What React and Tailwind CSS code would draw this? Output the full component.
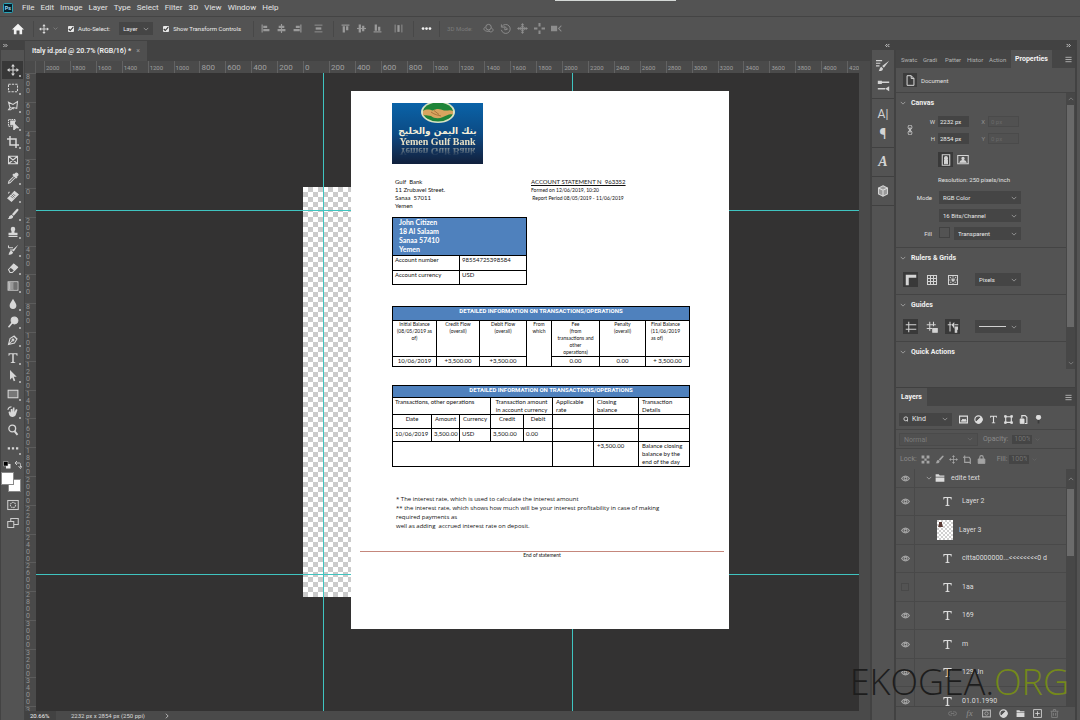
import React from "react";

const Svg = ({ s = 12, children, fill = "none", className = "" }) => (
  <svg width={s} height={s} viewBox="0 0 16 16" fill={fill} stroke={fill === "none" ? "currentColor" : "none"} strokeWidth="1.4" className={"shrink-0 " + className} aria-hidden="true">
    {children}
  </svg>
);

const MovePaths = () => (
  <>
    <path d="M8 2v12M2 8h12" />
    <path fill="currentColor" stroke="none" d="M8 0l2.6 3.4H5.4zM8 16l2.6-3.4H5.4zM0 8l3.4-2.6v5.2zM16 8l-3.400-2.600v5.200z" />
  </>
);
const Move = ({ s = 12 }) => <Svg s={s}><MovePaths /></Svg>;
const Brush = ({ s = 12 }) => (
  <Svg s={s} fill="currentColor">
    <path d="M14.800 1.200c.9.700.6 1.500 0 2.300L9 10.200 6.600 8.200l6-6.400c.7-.8 1.500-1.200 2.200-.6zM6 9l2.200 1.900c.2 2.600-2.300 4.300-7.200 3.600 1.900-1.100 1.500-2 2-3.500C3.500 9.600 4.700 8.800 6 9z" />
  </Svg>
);
const TypeT = ({ s = 12 }) => (
  <Svg s={s} fill="currentColor">
    <path d="M2 1.500h12V5h-1c-.3-1.500-.8-2-2-2H9v9.500c0 .8.500 1 2 1v1H5v-1c1.500 0 2-.2 2-1V3H5c-1.200 0-1.700.5-2 2H2z" />
  </Svg>
);
const Chev = ({ s = 6, className = "" }) => (
  <Svg s={s} className={className}><path strokeWidth="2" d="M2 5l6 6 6-6" /></Svg>
);
const Eye = () => (
  <Svg s={9}>
    <path strokeWidth="2" d="M1 8c3.500-5.500 10.500-5.500 14 0-3.500 5.500-10.500 5.500-14 0z" />
    <circle cx="8" cy="8" r="2.500" strokeWidth="2" />
  </Svg>
);
const Folder = ({ s = 10 }) => (
  <Svg s={s} fill="currentColor"><path d="M1 2h5l1.500 2H15v2H1zM1 7h14v7H1z" /></Svg>
);
const Menu = () => <Svg s={7}><path strokeWidth="2" d="M1 3h14M1 8h14M1 13h14" /></Svg>;
const Half = ({ s = 9 }) => (
  <Svg s={s}><circle cx="8" cy="8" r="6.500" strokeWidth="2" /><path fill="currentColor" d="M12.600 3.400A6.500 6.500 0 013.400 12.600z" /></Svg>
);

const TOOLS = [
  ["Move", <MovePaths />],
  ["Marquee", <rect x="2" y="3" width="12" height="10" strokeDasharray="3 1.500" />],
  ["Lasso", <path d="M2 3l6 3 6-4-1 9-5-1-3 3H2l2-3zM4 10l5 2" />],
  ["Object selection", <><path strokeDasharray="2 1" d="M7 11H2V2h9v4" /><path fill="currentColor" d="M5 4h5v5H5zM9 7l6 6h-3l-3 3z" /></>],
  ["Crop", <path strokeWidth="2" d="M4 0v12h12M0 4h12v12" />],
  ["Frame", <path d="M2 3h12v10H2zM2 3l12 10M14 3L2 13" />],
  ["Eyedropper", <><path d="M9 6l-6.500 6.500L2 15l2-.5L10.500 8" /><path fill="currentColor" d="M8 4l4 4 1-1-1-1 2-1c2-2-1-5-3-3L10 4 9 3z" /></>],
  ["Healing brush", <><path fill="currentColor" d="M1 11l9-9 5 4-9 9z" /><path strokeWidth="1" d="M2 5V3h2" /><path stroke="#535353" strokeWidth="1" d="M6 6l4 4M5 8l3 3M8 5l3 3" /></>],
  ["Brush", <path fill="currentColor" stroke="none" d="M14.800 1.200c.9.700.6 1.500 0 2.300L9 10.200 6.600 8.200l6-6.400c.7-.8 1.500-1.200 2.200-.6zM6 9l2.200 1.900c.2 2.600-2.300 4.300-7.200 3.600 1.900-1.100 1.500-2 2-3.500z" />],
  ["Clone stamp", <path fill="currentColor" stroke="none" d="M5 4a3 3 0 116 0c0 2-1.500 2.500-1 5h4v3H2V9h4c.5-2.500-1-3-1-5zM2 13h12v1.500H2z" />],
  ["History brush", <><path d="M2 5h6M4 8h4M2 2v3" /><path fill="currentColor" stroke="none" d="M15 1L9 10 7 8zM6 9l2 2c0 2-3 4-6 3 1-1 1-5 4-5z" /></>],
  ["Eraser", <><path d="M2 10l7-7 5 4-7 7H4z" /><path fill="currentColor" d="M5 7l4-4 5 4-4 4z" /></>],
  ["Gradient", <><rect x="1.500" y="2.500" width="13" height="11" /><path fill="#bbb" stroke="none" d="M2 3h3v10H2z" /><path fill="#999" stroke="none" d="M5 3h4v10H5z" /><path fill="#707070" stroke="none" d="M9 3h5v10H9z" /></>],
  ["Blur", <path fill="currentColor" stroke="none" d="M8 1c2 4 4.500 6 4.500 9a4.500 4.500 0 01-9 0C3.500 7 6 5 8 1z" />],
  ["Dodge", <><circle cx="10" cy="6" r="4.500" fill="currentColor" /><path strokeWidth="2" d="M7 9l-5 6" /></>],
  ["Pen", <><path d="M2 14L4 6l5-3 4 4-3 5zM2 14l5-5M9 2l5 5" /><circle cx="8" cy="8" r="1.200" /></>],
  ["Type", <path fill="currentColor" stroke="none" d="M2 1.500h12V5h-1c-.3-1.500-.8-2-2-2H9v9.500c0 .8.500 1 2 1v1H5v-1c1.500 0 2-.2 2-1V3H5c-1.200 0-1.700.5-2 2H2z" />],
  ["Path selection", <path fill="currentColor" stroke="none" d="M4 0l9 9H9l2 5-2 1-2-5-3 3z" />],
  ["Rectangle", <rect x="1.500" y="3" width="13" height="10" fill="#777" />],
  ["Rotate view", <><path fill="currentColor" stroke="none" d="M2 8l2-1 1 2V4h2v4l1-6h2v6l2-4 2 1-2 6c-1 4-7 5-9 1z" /><path d="M1 5c1-3 3-4 5-4" /></>],
  ["Zoom", <><circle cx="7" cy="6" r="4.500" strokeWidth="1.800" /><path strokeWidth="2.500" d="M10 9.500l4 5" /></>],
  ["More tools", <path fill="currentColor" stroke="none" d="M1 7h3v3H1zM6.500 7h3v3h-3zM12 7h3v3h-3z" />],
];

const H_LABELS = Array.from({ length: 32 }, (_, i) => Math.abs(-2000 + i * 200));
const V_LABELS = Array.from({ length: 23 }, (_, i) => Math.abs(-800 + i * 200));

function Select({ label, value, className = "", dim = false }) {
  return (
    <span className={"relative flex h-[13px] items-center bg-[#454545] " + className}>
      <select aria-label={label} className={"h-full w-full appearance-none truncate bg-transparent px-1 leading-3 outline-none " + (dim ? "text-[#7b7b7b]" : "text-[#e8e8e8]")}>
        <option>{value}</option>
      </select>
      <Chev s={6} className={"pointer-events-none absolute right-1 " + (dim ? "text-[#707070]" : "text-[#a8a8a8]")} />
    </span>
  );
}

function Check({ label }) {
  return (
    <label className="flex items-center gap-1">
      <input type="checkbox" defaultChecked className="peer sr-only" />
      <span className="flex size-[6px] items-center justify-center rounded-[1px] bg-[#e8e8e8] text-[#333]">
        <Svg s={6}><path strokeWidth="3" d="M2 8l4 4 8-9" /></Svg>
      </span>
      {label}
    </label>
  );
}

function MenuBar() {
  return (
    <nav className="flex h-[17px] shrink-0 items-center border-b border-[#444] pl-[3px] text-[8px] text-[#e4e4e4]">
      <svg width="10" height="10" viewBox="0 0 20 20" aria-hidden="true" className="mr-[6px]">
        <rect x="1" y="1" width="18" height="18" rx="2" fill="#04202e" stroke="#2aa5b8" strokeWidth="2" />
        <text x="10" y="14" textAnchor="middle" fontSize="11" fontWeight="700" fill="#9fdcf5" fontFamily="Roboto, sans-serif">Ps</text>
      </svg>
      {["File", "Edit", "Image", "Layer", "Type", "Select", "Filter", "3D", "View", "Window", "Help"].map((m) => (
        <button key={m} type="button" className="px-[3px] leading-4">{m}</button>
      ))}
    </nav>
  );
}

const Rule = () => <span className="h-4 w-px bg-[#484848]" />;

function OptionsBar() {
  const al = {
    l: <><path strokeWidth="2" d="M2 1v14" /><path fill="currentColor" stroke="none" d="M4 3h7v4H4zM4 9h11v4H4z" /></>,
    c: <><path strokeWidth="2" d="M8 0v16" /><path fill="currentColor" stroke="none" d="M3 3h10v4H3zM1 9h14v4H1z" /></>,
    r: <><path strokeWidth="2" d="M14 1v14" /><path fill="currentColor" stroke="none" d="M5 3h7v4H5zM1 9h11v4H1z" /></>,
    d: <><path strokeWidth="1.500" d="M1 2h14M1 14h14" /><path fill="currentColor" stroke="none" d="M3 6h10v4H3z" /></>,
    t: <><path strokeWidth="2" d="M1 2h14" /><path fill="currentColor" stroke="none" d="M3 4h4v11H3zM9 4h4v7H9z" /></>,
    m: <><path strokeWidth="2" d="M0 8h16" /><path fill="currentColor" stroke="none" d="M3 1h4v14H3zM9 3h4v10H9z" /></>,
    b: <><path strokeWidth="2" d="M1 14h14" /><path fill="currentColor" stroke="none" d="M3 1h4v11H3zM9 5h4v7H9z" /></>,
    v: <><path strokeWidth="1.500" d="M2 1v14M14 1v14" /><path fill="currentColor" stroke="none" d="M6 2h4v12H6z" /></>,
  };
  const Btn = ({ name, k }) => <button type="button" aria-label={name}><Svg s={9}>{al[k]}</Svg></button>;
  return (
    <div className="flex h-[23px] shrink-0 items-center pl-3 text-[6px] text-[#ececec]">
      <button type="button" aria-label="Home" className="mr-[9px] text-[#f2f2f2]">
        <Svg s={12} fill="currentColor"><path d="M8 1l8 7.500h-2.500V15H10v-5H6v5H2.500V8.500H0z" /></Svg>
      </button>
      <Rule />
      <button type="button" aria-label="Move tool preset" className="ml-[5px] flex items-center gap-1 text-[#dcdcdc]"><Move s={10} /><Chev s={5} className="text-[#999]" /></button>
      <div className="ml-[10px] flex items-center"><Check label="Auto-Select:" /></div>
      <Select label="Auto-select target" value="Layer" className="ml-[9px] w-[34px]" />
      <div className="ml-[10px]"><Check label="Show Transform Controls" /></div>
      <div className="ml-[12px] flex items-center gap-[7px] text-[#9a9a9a]">
        <Rule /><Btn name="Align left" k="l" /><Btn name="Align centre" k="c" /><Btn name="Align right" k="r" />
      </div>
      <div className="ml-[12px] flex text-[#9a9a9a]"><Btn name="Distribute" k="d" /></div>
      <div className="ml-[10px] flex items-center gap-[7px] text-[#9a9a9a]">
        <Rule /><Btn name="Align top" k="t" /><Btn name="Align middle" k="m" /><Btn name="Align bottom" k="b" />
      </div>
      <div className="ml-[12px] flex text-[#9a9a9a]"><Btn name="Distribute vertically" k="v" /></div>
      <div className="ml-[10px] flex items-center gap-[7px]">
        <Rule />
        <button type="button" aria-label="More" className="text-[#f0f0f0]"><Svg s={11} fill="currentColor"><circle cx="3" cy="8" r="2" /><circle cx="8" cy="8" r="2" /><circle cx="13" cy="8" r="2" /></Svg></button>
        <Rule />
      </div>
      <span className="ml-[7px] text-[#7c7c7c]">3D Mode:</span>
      <div className="ml-[10px] flex items-center gap-[6px] text-[#8d8d8d]">
        <Svg s={11}><circle cx="8" cy="6" r="4" /><path d="M3 6c-5 4 2 7 7 6M12 7c5 3 2 6-1 6l-3-2" /></Svg>
        <Svg s={11}><path d="M2 2v4h4M3 5a6.500 6.500 0 11-1 5" /><path d="M7 5l4 4-4 1z" /></Svg>
        <Svg s={11}><MovePaths /><circle cx="8" cy="8" r="3" /></Svg>
        <Svg s={11}><path strokeWidth="3" d="M8 0v5M8 11v5M0 8h5M11 8h5" /></Svg>
        <Svg s={11} fill="currentColor"><path d="M0 4h9v8H0zM10 8l5-5v2l-3 3 3 3v2z" /></Svg>
      </div>
    </div>
  );
}

function Toolbar() {
  return (
    <aside className="flex w-[25px] shrink-0 flex-col border-x border-[#434343] bg-[#535353]">
      <div className="flex h-[10px] shrink-0 items-center bg-[#424242] pl-[2px] text-[#d0d0d0]"><Svg s={5}><path strokeWidth="3" d="M1 3l5 5-5 5M8 3l5 5-5 5" /></Svg></div>
      <div className="h-[11px] shrink-0" />
      {TOOLS.map(([name, icon], i) => (
        <button key={name} type="button" aria-label={name} className={"relative mx-[1px] flex h-[18px] shrink-0 items-center justify-center text-[#d8d8d8] " + (i === 0 ? "bg-[#383838]" : "")}>
          <Svg s={12}>{icon}</Svg>
          {i !== 5 && i !== 20 && <span className="absolute bottom-[2px] right-[2px] size-[2px] bg-[#a8a8a8]" />}
        </button>
      ))}
      <div className="mt-[4px] flex justify-between px-[2px] text-[#c8c8c8]">
        <Svg s={8}><path fill="#eee" stroke="none" d="M6 6h9v9H6z" /><path fill="#000" stroke="#ddd" strokeWidth="1" d="M1 1h9v9H1z" /></Svg>
        <Svg s={8}><path strokeWidth="2" d="M3 4h8c2 0 2 1 2 8M6 0L2 4l4 4M9 10l4 5 3-5" /></Svg>
      </div>
      <div className="relative mt-[3px] size-[20px] shrink-0">
        <span className="absolute bottom-0 right-0 size-[13px] border border-[#888] bg-white" />
        <span className="absolute left-0 top-0 size-[13px] border border-[#888] bg-white" />
      </div>
      <button type="button" aria-label="Quick mask" className="mt-[4px] flex h-[18px] items-center justify-center text-[#ccc]"><Svg s={12}><rect x="1" y="2" width="14" height="12" /><circle cx="8" cy="8" r="3.500" strokeDasharray="2 1" /></Svg></button>
      <button type="button" aria-label="Screen mode" className="flex h-[18px] items-center justify-center text-[#ccc]"><Svg s={12}><path d="M1 6h8v8H1zM5 6V2h10v8H9" /></Svg></button>
    </aside>
  );
}

function Logo() {
  return (
    <div className="flex h-[61px] w-[91px] flex-col items-center overflow-hidden bg-linear-to-b from-[#0a63a8] via-[#0b4b85] to-[#10203c]">
      <svg width="36" height="21" viewBox="0 0 72 42" aria-hidden="true" className="shrink-0">
        <ellipse cx="36" cy="18" rx="34" ry="22" fill="#d9e3c4" />
        <ellipse cx="36" cy="18" rx="30" ry="19" fill="#1f8438" />
        <path d="M6 16c8-5 14-2 20-1 6-4 14-4 22 0 6 1 12-2 18 1v7c-8-2-12 2-20 5-8 4-18 3-24-2-6 0-10-2-16-1z" fill="#d8a45f" />
        <path d="M22 18c8 6 14 6 20 8M28 15l10 8" stroke="#97642f" strokeWidth="1.500" fill="none" />
      </svg>
      <div dir="rtl" lang="ar" className="mt-[1px] whitespace-nowrap font-['DejaVu_Sans',sans-serif] text-[9px] font-bold leading-[12px] text-[#f4efd9]">بنك اليمن والخليج</div>
      <div className="whitespace-nowrap font-['Liberation_Serif',serif] text-[10px] font-bold leading-[9px] text-[#e6dfc4] [-webkit-box-reflect:below_1px_linear-gradient(transparent,rgba(255,255,255,0.6))]">Yemen Gulf Bank</div>
    </div>
  );
}

const cell = "border border-black p-0 align-top font-normal ";

function Statement() {
  return (
    <article className="absolute left-[315px] top-[18px] min-h-[538px] w-[378px] bg-white pt-3 font-[Lato,sans-serif] text-[6px] leading-[8px] text-[#111]">
      <div className="pl-[41px]">
        <Logo />
        <div className="mt-[14px] flex">
          <address className="w-[139px] whitespace-pre pl-[3px] not-italic">{"Gulf  Bank\n11 Zrubavel Street.\nSanaa  57011\nYemen"}</address>
          <div className="whitespace-pre text-[5px]">
            <h1 className="text-[6px] underline">{"ACCOUNT STATEMENT N  963352"}</h1>
            <p>Formed on 12/06/2019, 10:20</p>
            <p>{" Report Period 08/05/2019 - 11/06/2019"}</p>
          </div>
        </div>

        <table className="mt-[7px] w-[135px] table-fixed border-collapse">
          <tbody>
            <tr><th colSpan="2" className={"h-[38px] border border-black bg-[#4f81bd] p-0 pl-[6px] text-left align-top text-[7px] font-bold leading-[9px] text-white"}>John Citizen<br />18 Al Salaam<br />Sanaa 57410<br />Yemen</th></tr>
            <tr><td className={cell + "h-[15px] pl-[2px]"}>Account number</td><td className={cell + "pl-[2px]"}>98554725398584</td></tr>
            <tr><td className={cell + "h-[14px] pl-[2px]"}>Account currency</td><td className={cell + "pl-[2px]"}>USD</td></tr>
          </tbody>
        </table>

        <table className="mt-[21px] w-[298px] table-fixed border-collapse text-center">
          <colgroup><col className="w-[44px]" /><col className="w-[43px]" /><col className="w-[47px]" /><col className="w-[25px]" /><col className="w-[48px]" /><col className="w-[46px]" /><col /></colgroup>
          <tbody>
            <tr><th colSpan="7" className="h-[14px] border border-black bg-[#4f81bd] p-0 align-top font-[Roboto,sans-serif] text-[6px] font-bold text-white">DETAILED INFORMATION ON TRANSACTIONS/OPERATIONS</th></tr>
            <tr className="text-[5px] leading-[7px]">
              <th className={cell + "h-[36px]"}>Initial Balance<br />(08/05/2019 as<br />of)</th>
              <th className={cell}>Credit Flow<br />(overall)</th>
              <th className={cell}>Debit Flow<br />(overall)</th>
              <th rowSpan="2" className={cell}>From<br />which</th>
              <th className={cell}>Fee<br />(from<br />transactions and<br />other<br />operations)</th>
              <th className={cell}>Penalty<br />(overall)</th>
              <th className={cell + "pl-[5px] text-left"}>Final Balance<br />(11/06/2019<br />as of)</th>
            </tr>
            <tr>
              {["10/06/2019", "+3,500.00", "+3,500.00", "0.00", "0.00", "+ 3,500.00"].map((t, i) => <td key={i} className={cell + "h-[10px]"}>{t}</td>)}
            </tr>
          </tbody>
        </table>

        <table className="mt-[18px] w-[298px] table-fixed border-collapse">
          <colgroup><col className="w-[39px]" /><col className="w-[28px]" /><col className="w-[31px]" /><col className="w-[33px]" /><col className="w-[29px]" /><col className="w-[41px]" /><col className="w-[45px]" /><col /></colgroup>
          <tbody>
            <tr><th colSpan="8" className="h-[12px] border border-black bg-[#4f81bd] p-0 pl-5 align-top font-[Roboto,sans-serif] text-[6px] font-bold text-white">DETAILED INFORMATION ON TRANSACTIONS/OPERATIONS</th></tr>
            <tr className="text-left">
              <th colSpan="3" className={cell + "h-[17px] pl-[2px]"}>Transactions, other operations</th>
              <th colSpan="2" className={cell + "whitespace-nowrap text-center"}>Transaction amount<br />in account currency</th>
              <th className={cell + "pl-[3px]"}>Applicable<br />rate</th>
              <th className={cell + "pl-[3px]"}>Closing<br />balance</th>
              <th className={cell + "pl-[3px]"}>Transaction<br />Details</th>
            </tr>
            <tr className="text-center">
              {["Date", "Amount", "Currency", "Credit", "Debit", "", "", ""].map((t, i) => <td key={i} className={cell + "h-[14px]"}>{t}</td>)}
            </tr>
            <tr>
              {["10/06/2019", "3,500.00", "USD", "3,500.00", "0.00", "", "", ""].map((t, i) => <td key={i} className={cell + "h-[13px] pl-[2px] pt-[1px]"}>{t}</td>)}
            </tr>
            <tr>
              <td colSpan="5" className={cell + "h-[24px]"} /><td className={cell} />
              <td className={cell + "pl-[3px]"}>+3,500.00</td>
              <td className={cell + "pl-[3px]"}>Balance closing<br />balance by the<br />end of the day</td>
            </tr>
          </tbody>
        </table>

        <div className="mt-[28px] whitespace-pre pl-1 font-['Open_Sans',sans-serif] leading-[9px]">
          {"* The interest rate, which is used to calculate the interest amount\n** the interest rate, which shows how much will be your interest profitability in case of making\nrequired payments as\nwell as adding  accrued interest rate on deposit."}
        </div>
      </div>
      <p className="ml-[9px] mr-[5px] mt-[20px] border-t border-[#c5877c] text-center text-[5px] leading-[7px]">End of statement</p>
    </article>
  );
}

function Workspace() {
  return (
    <main className="flex min-w-0 flex-1 flex-col bg-[#424242]">
      <div className="flex h-[21px] shrink-0 items-end">
        <div role="tab" aria-selected="true" className="flex h-[20px] items-center gap-[5px] bg-[#4f4f4f] pl-[7px] pr-[7px] text-[7px] font-semibold text-[#f0f0f0]">
          Italy id.psd @ 20.7% (RGB/16) *
          <button type="button" aria-label="Close" className="font-normal text-[#999]">×</button>
        </div>
      </div>
      <div className="flex h-[12px] shrink-0 bg-[#4a4a4a] text-[#a0a0a0]">
        <span className="w-[11px] shrink-0 border-r border-[#5b5b5b]" />
        <div className="min-w-0 flex-1 overflow-hidden pl-[8px]">
          <div className="-mr-[14px] flex h-full">
            {H_LABELS.map((n, i) => (
              <span key={i} className={"min-w-0 flex-1 border-l border-[#626262] pl-[1px] leading-[14px] " + (n < 1000 ? "text-[8px]" : "text-[6px]")}>{n}</span>
            ))}
          </div>
        </div>
        <span className="w-[11px] shrink-0" />
      </div>
      <div className="flex min-h-0 flex-1">
        <div className="w-[11px] shrink-0 overflow-hidden bg-[#4a4a4a]">
          <div className="flex h-[calc(100%+24px)] flex-col text-[#949494]">
            {V_LABELS.map((n, i) => (
              <span key={i} className="flex min-h-0 flex-1 flex-col items-start border-t border-[#5c5c5c] pl-[1px] text-[7px] leading-[7px]">
                {String(n).split("").map((d, j) => <span key={j}>{d}</span>)}
              </span>
            ))}
          </div>
        </div>
        <div className="relative min-w-0 flex-1 overflow-hidden bg-[#333232]">
          <div className="absolute left-[267px] top-[114px] h-[410px] w-[400px] bg-white bg-[conic-gradient(#cbcbcb_25%,white_0_50%,#cbcbcb_0_75%,white_0)] bg-size-[10px_10px]" />
          <span className="absolute left-0 right-0 top-[137px] h-px bg-[#3fc4c0]" />
          <span className="absolute left-0 right-0 top-[501px] h-px bg-[#3fc4c0]" />
          <span className="absolute bottom-0 left-[287px] top-0 w-px bg-[#3fc4c0]" />
          <span className="absolute bottom-0 left-[536px] top-0 w-px bg-[#3fc4c0]" />
          <Statement />
        </div>
        <div className="w-[11px] shrink-0 bg-[#4a4a4a]" />
      </div>
      <footer className="flex h-[9px] shrink-0 items-center overflow-hidden whitespace-pre bg-[#4a4a4a] text-[6px] leading-[9px] text-[#d8d8d8]">
        <span className="w-[31px] bg-[#424242] pl-[5px] text-[#f0f0f0]">20.66%</span>
        <span className="w-[108px] pl-[15px]">2232 px x 2854 px (250 ppi)</span>
        <Svg s={6} className="-rotate-90"><path strokeWidth="2" d="M2 5l6 6 6-6" /></Svg>
      </footer>
    </main>
  );
}

function IconStrip() {
  const grp = "flex flex-col items-center border-b border-[#404040] text-[#d4d4d4] ";
  return (
    <aside className="flex w-[26px] shrink-0 flex-col border-x-2 border-[#424242] bg-[#535353]">
      <div className="flex h-[10px] shrink-0 items-center justify-end bg-[#424242] pr-1 text-[#d0d0d0]"><Svg s={5}><path strokeWidth="3" d="M7 3L2 8l5 5M14 3L9 8l5 5" /></Svg></div>
      <div className={grp + "gap-[7px] pb-[6px] pt-[8px]"}>
        <button type="button" aria-label="Brush settings"><Svg s={14}><path d="M0 3h7M0 6h5M0 9h4" strokeWidth="1.200" /><path fill="currentColor" stroke="none" d="M15 3L9 11 7 9zM6 10l2 2c0 3-3 3-5 3 1-1 1-4 3-5z" /></Svg></button>
        <button type="button" aria-label="Brushes"><Svg s={13}><path strokeWidth="2" d="M5 4h10M1 12h9" /><path fill="currentColor" stroke="none" d="M1 2h5v4H1zM10 12l5-3v6z" /></Svg></button>
      </div>
      <div className={grp + "gap-[8px] py-[8px]"}>
        <button type="button" aria-label="Character" className="flex h-[13px] items-center text-[12px] leading-none">A|</button>
        <button type="button" aria-label="Paragraph" className="flex h-[11px] items-center text-[14px] leading-none">¶</button>
      </div>
      <div className={grp + "py-[8px]"}>
        <button type="button" aria-label="Glyphs" className="h-[12px] font-['Liberation_Serif',serif] text-[14px] font-bold italic leading-[12px]">A</button>
      </div>
      <div className={grp + "py-[8px]"}>
        <button type="button" aria-label="3D"><Svg s={12}><path fill="#9a9a9a" d="M8 1l6 3v8l-6 3-6-3V4z" /><path stroke="#ddd" d="M2 4l6 3 6-3M8 7v8" /></Svg></button>
      </div>
    </aside>
  );
}

const SecHead = ({ children }) => (
  <h2 className="flex h-[20px] items-center gap-[5px] pl-[4px] text-[7px] font-bold text-[#f0f0f0]"><Chev s={6} className="text-[#b0b0b0]" />{children}</h2>
);

function Field({ label, value, dim }) {
  return (
    <label className={"flex h-[17px] items-center gap-[3px] " + (dim ? "text-[#8f8f8f]" : "text-[#d8d8d8]")}>
      <span className="w-[6px] text-right">{label}</span>
      <input defaultValue={value} disabled={dim} className={"h-[11px] w-[31px] min-w-0 px-[2px] outline-none " + (dim ? "border border-[#4a4a4a] bg-[#515151] text-[#696969]" : "bg-[#444] text-[#ececec]")} />
    </label>
  );
}

function IconBtn({ name, on, children }) {
  return <button type="button" aria-label={name} className={"flex size-[15px] items-center justify-center text-[#d4d4d4] " + (on ? "bg-[#393939]" : "")}><Svg s={12}>{children}</Svg></button>;
}

function Properties() {
  return (
    <section className="flex h-[337px] shrink-0 flex-col text-[6px] text-[#e2e2e2]">
      <div role="tablist" className="flex h-[18px] shrink-0 items-stretch bg-[#454545] pl-[5px]">
        {["Swatc", "Gradi", "Patter", "Histor", "Action"].map((t) => (
          <button key={t} type="button" role="tab" className="w-[22px] whitespace-nowrap text-left text-[#b4b4b4]">{t}</button>
        ))}
        <button type="button" role="tab" aria-selected="true" className="bg-[#535353] px-[4px] text-[7px] font-bold text-[#f4f4f4]">Properties</button>
        <button type="button" aria-label="Panel menu" className="ml-auto pr-[3px] text-[#b8b8b8]"><Menu /></button>
      </div>
      <div className="flex h-[25px] shrink-0 items-center gap-[4px] border-b border-[#444] pl-[7px]">
        <span className="flex size-[14px] items-center justify-center bg-[#3c3c3c] text-[#ddd]"><Svg s={11}><path d="M3 1h6l4 4v10H3zM9 1v4h4" /></Svg></span>
        Document
      </div>
      <div className="flex min-h-0 flex-1">
        <div className="min-w-0 flex-1">
          <div className="h-[155px] border-b border-[#444]">
            <SecHead>Canvas</SecHead>
            <div className="flex items-center pl-[9px]">
              <Svg s={10} className="mr-[14px] text-[#ccc]"><rect x="5" y="0" width="6" height="7" rx="3" /><rect x="5" y="9" width="6" height="7" rx="3" /><path strokeWidth="2" d="M8 4v8" /></Svg>
              <div><Field label="W" value="2232 px" /><Field label="H" value="2854 px" /></div>
              <div className="ml-[10px]"><Field label="X" value="0 px" dim /><Field label="Y" value="0 px" dim /></div>
            </div>
            <div className="mt-[5px] flex gap-[2px] pl-[42px]">
              <IconBtn name="Portrait" on><path d="M3 1h10v14H3z" /><circle cx="8" cy="5.500" r="2" fill="currentColor" /><path fill="currentColor" d="M6 8h4v5H6z" /></IconBtn>
              <IconBtn name="Landscape"><path d="M1 2h14v11H1z" /><circle cx="8" cy="6" r="1.500" fill="currentColor" /><path fill="currentColor" d="M4 11c1-3 7-3 8 0z" /></IconBtn>
            </div>
            <p className="mt-[5px] pl-[42px] leading-[15px]">Resolution: 250 pixels/inch</p>
            <div className="mt-[4px] grid grid-cols-[36px_82px] items-center gap-x-[7px] gap-y-[5px]">
              <span className="text-right">Mode</span><Select label="Mode" value="RGB Color" />
              <span /><Select label="Bit depth" value="16 Bits/Channel" />
              <span className="text-right">Fill</span>
              <div className="flex gap-[4px]"><span className="size-[11px] border border-[#424242]" /><Select label="Fill" value="Transparent" className="flex-1" /></div>
            </div>
          </div>
          <div className="h-[47px] border-b border-[#444]">
            <SecHead>Rulers &amp; Grids</SecHead>
            <div className="mt-[4px] flex items-center gap-[6px] pl-[7px]">
              <IconBtn name="Rulers" on><path strokeWidth="4" d="M3 15V3h12" /></IconBtn>
              <IconBtn name="Grid"><path d="M2 2h12v12H2zM2 6h12M2 10h12M6 2v12M10 2v12" /></IconBtn>
              <IconBtn name="Pixel grid"><path d="M2 2h12v12H2z" /><path strokeDasharray="1.500 1.500" d="M4 4l8 8M12 4l-8 8M8 3v10M3 8h10" /></IconBtn>
              <Select label="Units" value="Pixels" className="ml-[9px] w-[46px]" />
            </div>
          </div>
          <div className="h-[47px] border-b border-[#444]">
            <SecHead>Guides</SecHead>
            <div className="mt-[4px] flex items-center gap-[6px] pl-[7px]">
              <IconBtn name="Show guides" on><path d="M5 1v14M1 5h14M1 11h14" /></IconBtn>
              <IconBtn name="Lock guides"><path d="M5 1v12M10 1v6M1 5h12M1 10h7" /><path fill="currentColor" d="M9 10h6v5H9z" /></IconBtn>
              <IconBtn name="Smart guides" on><path d="M4 1v13M1 5h5M10 5h5" /><path fill="currentColor" d="M9 3v5l-2-3zM11 8h3v3h-1v4h-2z" /></IconBtn>
              <button type="button" aria-label="Guide style" className="ml-[9px] flex h-[13px] w-[46px] items-center justify-between bg-[#454545] px-1 text-[#a8a8a8]"><span className="h-px w-[27px] bg-[#d0d0d0]" /><Chev s={6} /></button>
            </div>
          </div>
          <SecHead>Quick Actions</SecHead>
        </div>
        <div className="mb-[18px] flex w-[9px] shrink-0 flex-col items-center bg-[#474747] text-[#888]">
          <Chev s={6} className="my-[3px] rotate-180" />
          <span className="h-[222px] w-[7px] bg-[#696969]" />
          <Chev s={6} className="mb-[3px] mt-auto" />
        </div>
      </div>
    </section>
  );
}

const LAYERS = [
  { n: "Layer 2" }, { n: "Layer 3", thumb: true }, { n: "citta0000000...<<<<<<<<0 d" }, { n: "1aa", off: true },
  { n: "169" }, { n: "m" }, { n: "129 Jn" }, { n: "01.01.1990" },
];

function Layers() {
  return (
    <section className="flex min-h-0 flex-1 flex-col border-t border-[#404040] text-[7px] text-[#dcdcdc]">
      <div className="flex h-[18px] shrink-0 items-stretch justify-between bg-[#454545]">
        <button type="button" role="tab" aria-selected="true" className="bg-[#535353] px-[5px] font-bold text-[#f4f4f4]">Layers</button>
        <button type="button" aria-label="Panel menu" className="pr-[3px] text-[#b8b8b8]"><Menu /></button>
      </div>
      <div className="flex h-[24px] shrink-0 items-center border-b border-[#464646] pl-[3px] pt-[3px]">
        <div className="flex w-[53px] items-center bg-[#454545] pl-[4px]">
          <Svg s={7}><circle cx="6.500" cy="6.500" r="4.500" strokeWidth="2" /><path strokeWidth="3" d="M10 10l5 5" /></Svg>
          <Select label="Filter kind" value="Kind" className="-ml-[2px] flex-1" />
        </div>
        <div className="ml-[7px] flex items-center gap-[6px] text-[#dedede]">
          <Svg s={9}><path strokeWidth="2" d="M1 2h14v12H1z" /><path fill="currentColor" d="M4 11l3-4 2 2 2-2 2 4z" /></Svg>
          <Half /><TypeT s={9} />
          <Svg s={9}><path strokeWidth="2" d="M3 3h10v10H3z" /><path fill="currentColor" d="M1 1h3v3H1zM12 1h3v3h-3zM1 12h3v3H1zM12 12h3v3h-3z" /></Svg>
          <Svg s={9}><path strokeWidth="2" d="M5 6V1h6l3 3v11h-4" /><path fill="currentColor" d="M2 7h7v8H2z" /></Svg>
          <Svg s={9}><circle cx="8" cy="4" r="4" fill="currentColor" /><path stroke="#3b3b3b" strokeWidth="3" d="M8 9v6" /></Svg>
        </div>
      </div>
      <div className="flex h-[19px] shrink-0 items-center border-b border-[#464646] pl-[3px] text-[#8a8a8a]">
        <Select label="Blend mode" value="Normal" dim className="w-[79px] border border-[#4a4a4a] bg-[#505050]" />
        <label className="ml-[5px] flex items-center gap-[4px]">Opacity:<input disabled defaultValue="100%" className="h-[9px] w-[20px] bg-[#454545] px-[2px] text-[#727272]" /></label>
        <Chev s={5} className="ml-[3px] text-[#6a6a6a]" />
      </div>
      <div className="flex h-[20px] shrink-0 items-center pl-[4px] text-[#8a8a8a]">
        <span className="mr-[4px]">Lock:</span>
        <div className="flex items-center gap-[5px] text-[#a4a4a4]">
          <Svg s={9} fill="currentColor"><path d="M1 1h5v5H1zM10 1h5v5h-5zM6 6h4v4H6zM1 10h5v5H1zM10 10h5v5h-5z" /></Svg>
          <Brush s={9} /><Move s={9} />
          <Svg s={9}><path strokeWidth="2" d="M3 4h8l2 3v6H3zM0 4h3M13 13v3M3 1v3" /></Svg>
          <Svg s={9}><path fill="currentColor" d="M2 7h12v8H2z" /><path strokeWidth="2" d="M5 7V4c0-4 6-4 6 0v3" /></Svg>
        </div>
        <label className="ml-[11px] flex items-center gap-[2px]">Fill:<input disabled defaultValue="100%" className="h-[9px] w-[20px] bg-[#454545] px-[2px] text-[#727272]" /></label>
        <Chev s={5} className="ml-[3px] text-[#6a6a6a]" />
      </div>
      <div className="flex min-h-0 flex-1 overflow-hidden">
        <ul className="flex min-w-0 flex-1 flex-col">
          <li className="flex h-[19px] shrink-0 items-stretch border-b border-[#494949]">
            <button type="button" aria-label="Toggle visibility" className="flex w-[19px] items-center justify-center border-r border-[#494949] text-[#a4a4a4]"><Eye /></button>
            <span className="flex items-center pl-[11px]"><Chev s={6} className="mr-[3px] text-[#b0b0b0]" /><Folder /><span className="ml-[6px]">edite text</span></span>
          </li>
          {LAYERS.map((l) => (
            <li key={l.n} className="flex h-[28px] shrink-0 items-stretch border-b border-[#494949] odd:h-[29px]">
              <button type="button" aria-label="Toggle visibility" className="flex w-[19px] items-center justify-center border-r border-[#494949] text-[#a4a4a4]">
                {l.off ? <span className="size-[8px] border border-[#494949]" /> : <Eye />}
              </button>
              {l.thumb ? (
                <span className="flex items-center gap-[6px] pl-[22px]">
                  <svg width="16" height="20" viewBox="0 0 16 20" aria-hidden="true">
                    <defs><pattern id="chk" width="4" height="4" patternUnits="userSpaceOnUse"><path fill="#fff" d="M0 0h4v4H0z" /><path fill="#d0d0d0" d="M0 0h2v2H0zM2 2h2v2H2z" /></pattern></defs>
                    <path fill="url(#chk)" d="M0 0h16v20H0z" /><path fill="#5a3a34" d="M2 2h3v2l1 3H1l1-3z" />
                  </svg>
                  {l.n}
                </span>
              ) : (
                <span className="flex items-center gap-[9px] pl-[27px]"><TypeT s={11} />{l.n}</span>
              )}
            </li>
          ))}
        </ul>
        <div className="flex w-[9px] shrink-0 flex-col items-center bg-[#474747] text-[#909090]"><Chev s={6} className="my-[7px] rotate-180" /><span className="h-[67px] w-[7px] bg-[#6b6b6b]" /></div>
      </div>
      <footer className="flex h-[14px] shrink-0 items-center justify-end gap-[8px] border-t border-[#464646] pr-[16px] text-[#d8d8d8]">
        <Svg s={9} className="text-[#808080]"><path d="M7 5H4a3 3 0 000 6h3M9 5h3a3 3 0 010 6H9M5 8h6" /></Svg>
        <span className="w-[9px] text-center font-['Liberation_Serif',serif] text-[9px] italic text-[#909090]">fx</span>
        <Svg s={9} className="text-[#b0b0b0]"><path strokeWidth="2" d="M1 2h14v12H1z" /><circle cx="8" cy="8" r="3" /></Svg>
        <Half /><Folder s={9} />
        <Svg s={9}><path strokeWidth="1.500" d="M1 1h14v14H1zM8 4v8M4 8h8" /></Svg>
        <Svg s={9} className="text-[#858585]"><path strokeWidth="1.500" d="M1 4h14M6 4V1h4v3M3 4v11h10V4M6 7v5M10 7v5" /></Svg>
      </footer>
    </section>
  );
}

export default function App() {
  return (
    <div className="relative flex h-screen flex-col overflow-hidden bg-[#535353] font-[Roboto,sans-serif]">
      <MenuBar />
      <OptionsBar />
      <div className="flex min-h-0 flex-1">
        <Toolbar />
        <Workspace />
        <IconStrip />
        <div className="flex w-[179px] shrink-0 flex-col">
          <div className="flex h-[10px] shrink-0 items-center justify-end bg-[#424242] pr-1 text-[#d0d0d0]"><Svg s={5}><path strokeWidth="3" d="M2 3l5 5-5 5M9 3l5 5-5 5" /></Svg></div>
          <Properties />
          <Layers />
        </div>
        <div className="w-[5px] shrink-0 border-l-2 border-[#424242]" />
      </div>
      <span className="absolute left-[555px] top-0 h-px w-[121px] bg-[#d4d8d6]" />
      <div className="pointer-events-none absolute bottom-[16px] right-[11px] whitespace-nowrap font-['Open_Sans',sans-serif] text-[36px] font-light leading-[44px] text-[#1d1d1d]">EKOGEA.<span className="text-[#75891a]">ORG</span></div>
    </div>
  );
}
